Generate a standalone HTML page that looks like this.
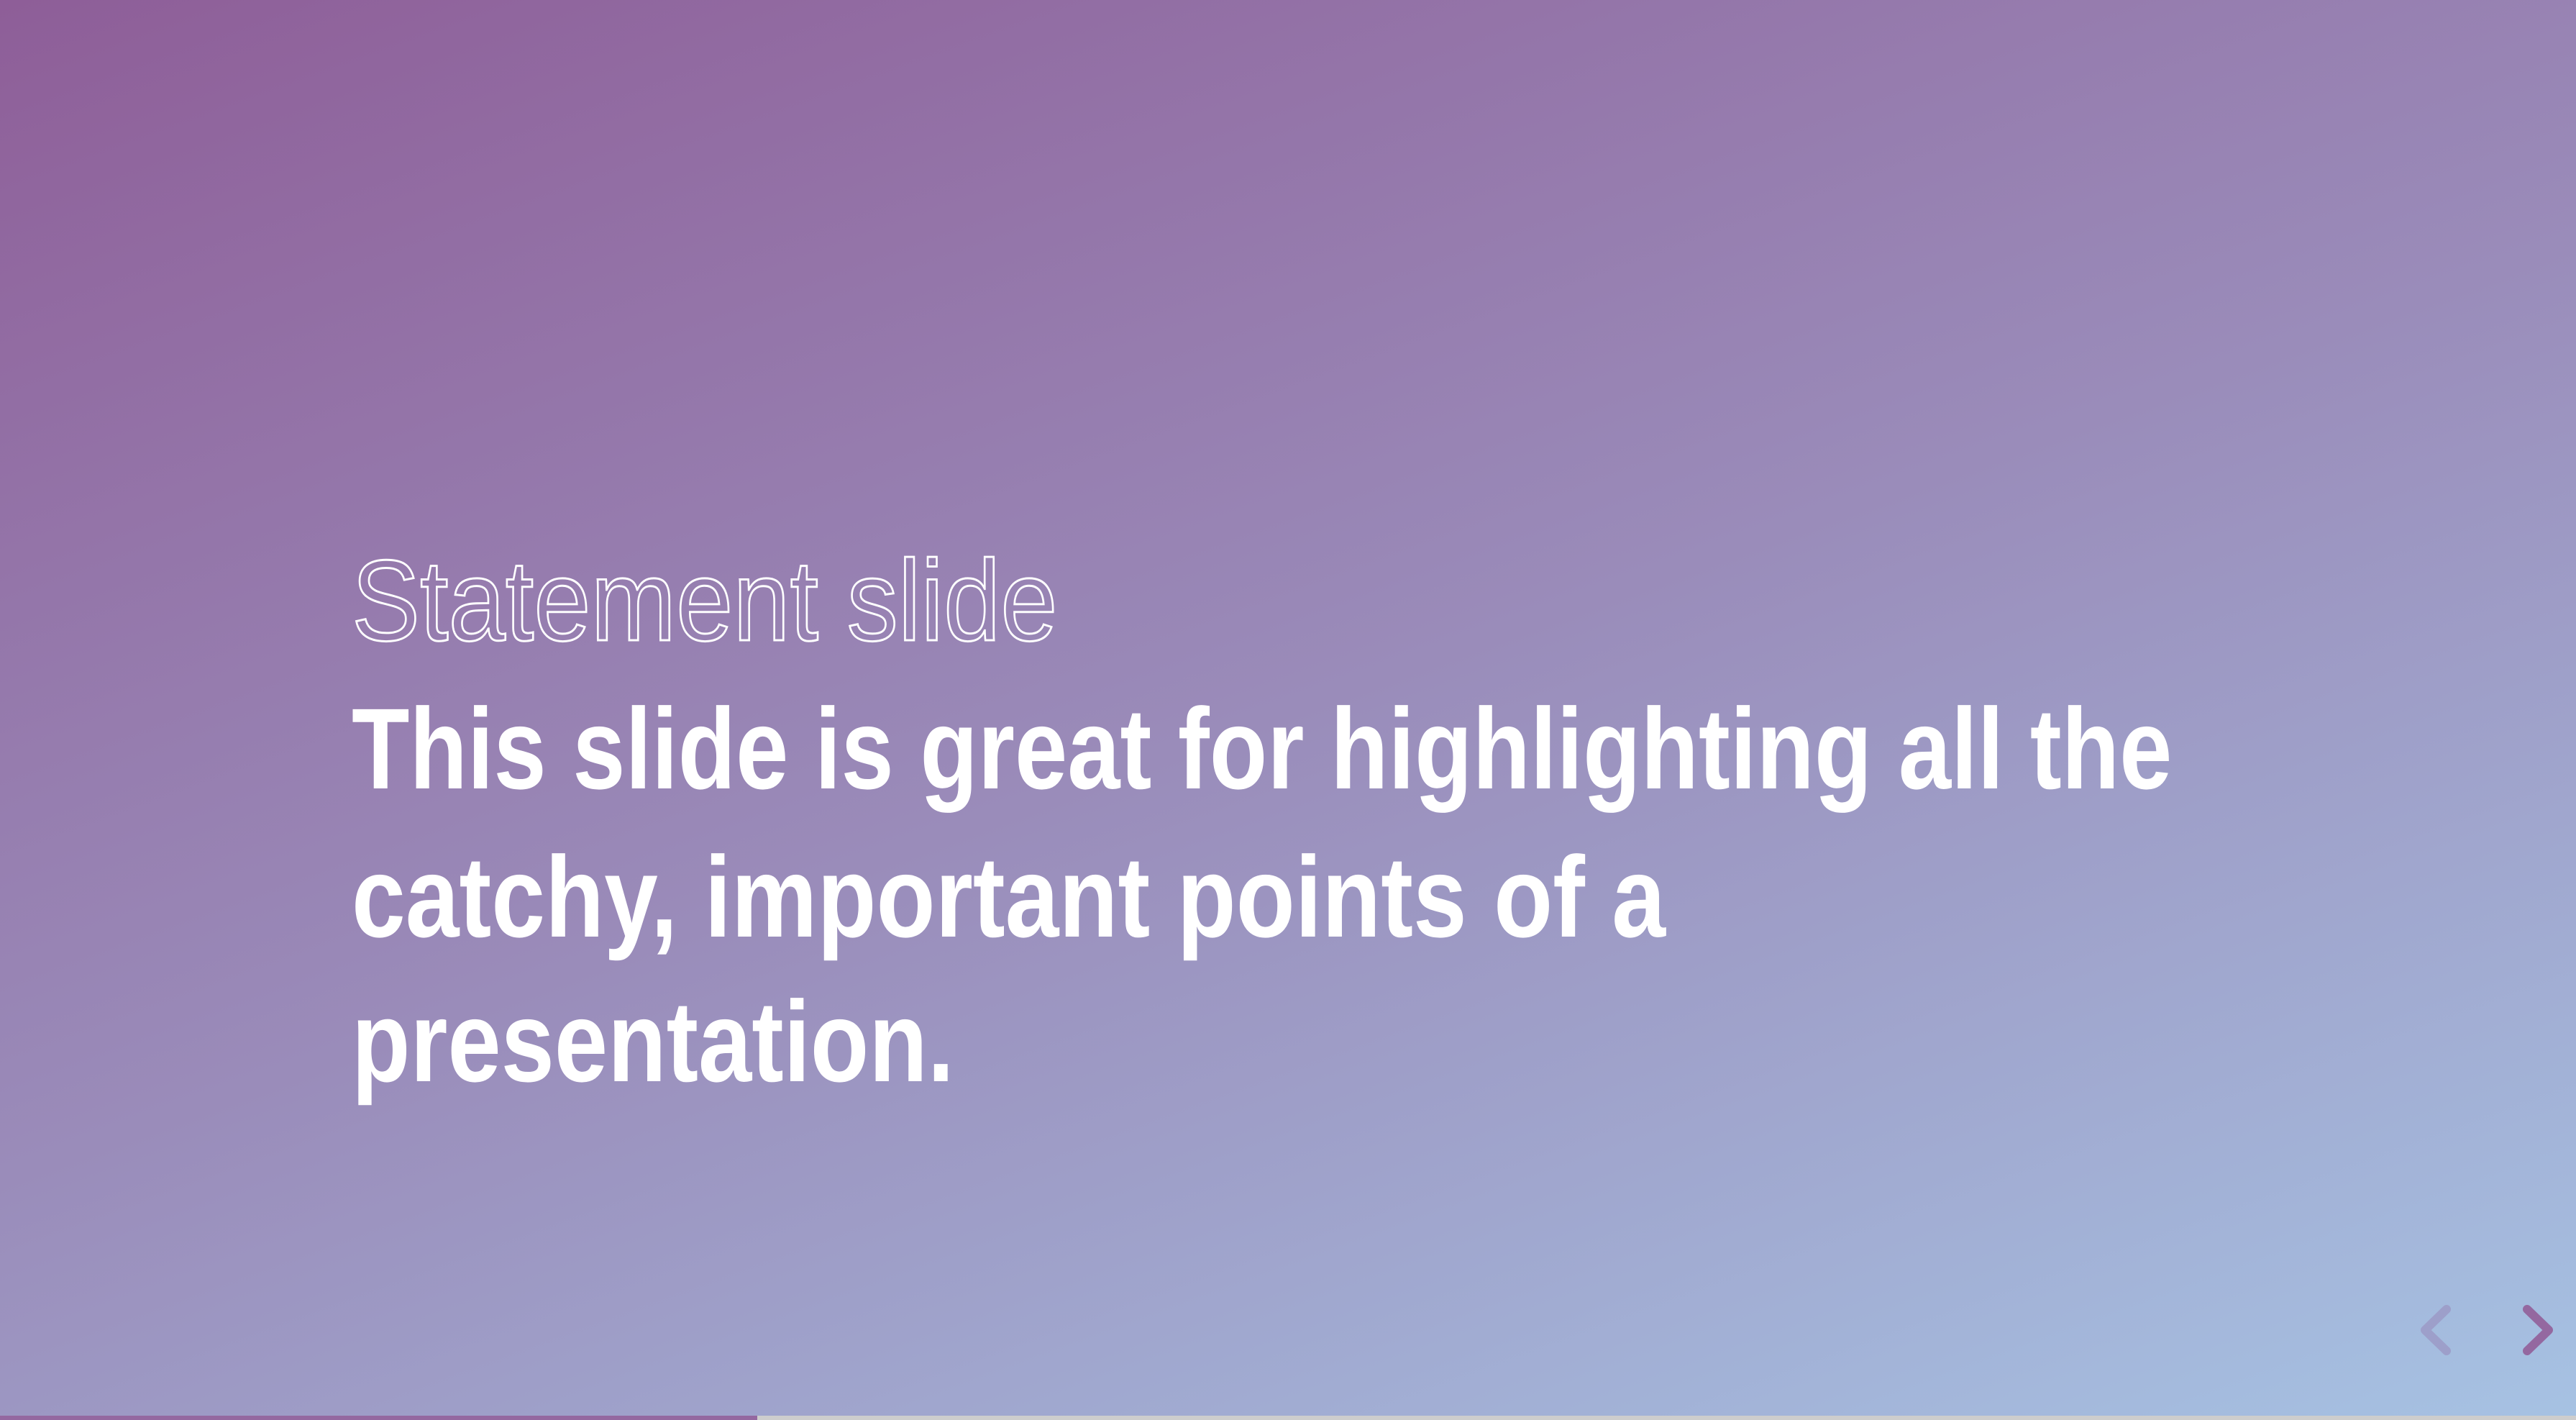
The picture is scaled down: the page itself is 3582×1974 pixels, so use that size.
<!DOCTYPE html>
<html><head><meta charset="utf-8"><style>
html,body{margin:0;padding:0}
body{width:3582px;height:1974px;overflow:hidden;position:relative;
background:linear-gradient(160deg,#8e5e98 0%,#9a8cba 50%,#a6c2e3 100%);
font-family:"Liberation Sans",sans-serif;}
.t{position:absolute;left:489px;white-space:nowrap;line-height:1;transform-origin:0 0;}
.title{top:755px;font-size:160px;color:transparent;-webkit-text-stroke:3px #fff;transform:scaleX(0.89);}
.body{color:#fff;font-weight:bold;font-size:160px;transform:scaleX(0.84);}
.bar{position:absolute;left:0;bottom:0;height:6px;width:100%;background:#cdcdcd}
.bar div{height:100%;width:1053px;background:#9468a0}
</style></head><body>
<div class="t title">Statement slide</div>
<div class="t body" style="top:961px;transform:scaleX(0.823)">This slide is great for highlighting all the</div>
<div class="t body" style="top:1167px">catchy, important points of a</div>
<div class="t body" style="top:1368px;transform:scaleX(0.834)">presentation.</div>
<svg style="position:absolute;left:0;top:0" width="3582" height="1974">
<path d="M3402 1820 L3372 1849 L3402 1878" fill="none" stroke="#9d9fca" stroke-width="12" stroke-linecap="round" stroke-linejoin="round"/>
<path d="M3514 1820 L3544 1849 L3514 1878" fill="none" stroke="#9468a0" stroke-width="12" stroke-linecap="round" stroke-linejoin="round"/>
</svg>
<div class="bar"><div></div></div>
</body></html>
